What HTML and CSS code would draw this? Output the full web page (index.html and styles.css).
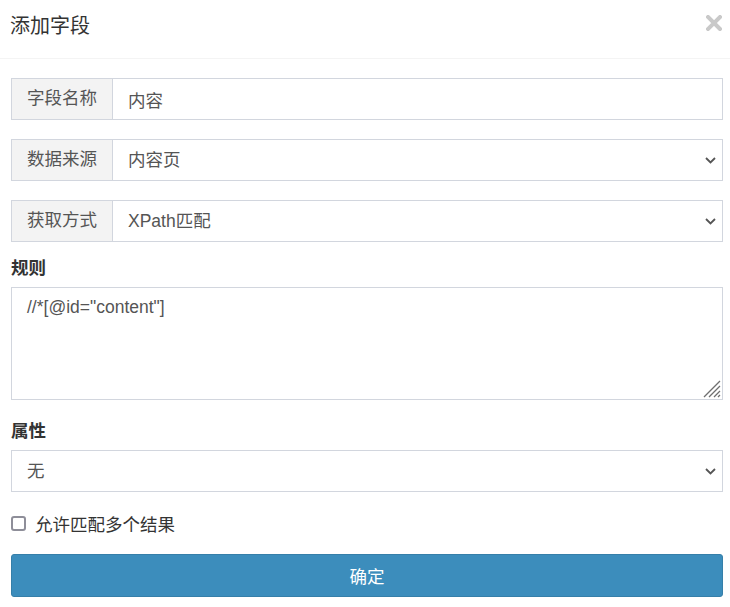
FILE: index.html
```html
<!DOCTYPE html>
<html lang="zh-CN">
<head>
<meta charset="utf-8">
<title>添加字段</title>
<link rel="stylesheet" href="styles.css">
</head>
<body>
<div class="modal">
  <div class="modal-header">
    <h4 class="modal-title">添加字段</h4>
    <button class="close" type="button" aria-label="Close">
      <svg width="16" height="16" viewBox="0 0 16 16"><path d="M2 2 L14 14 M14 2 L2 14" stroke="#c9c9c9" stroke-width="4" stroke-linecap="square"/></svg>
    </button>
  </div>
  <div class="modal-body">
    <div class="input-group">
      <span class="addon">字段名称</span>
      <input class="control" type="text" value="内容">
    </div>
    <div class="input-group">
      <span class="addon">数据来源</span>
      <div class="select-wrap">
        <select class="control select"><option>内容页</option></select>
        <svg class="chevron" width="11" height="7" viewBox="0 0 11 7"><path d="M1 1 L5.5 5.5 L10 1" fill="none" stroke="#555" stroke-width="1.8"/></svg>
      </div>
    </div>
    <div class="input-group last">
      <span class="addon">获取方式</span>
      <div class="select-wrap">
        <select class="control select"><option>XPath匹配</option></select>
        <svg class="chevron" width="11" height="7" viewBox="0 0 11 7"><path d="M1 1 L5.5 5.5 L10 1" fill="none" stroke="#555" stroke-width="1.8"/></svg>
      </div>
    </div>
    <div class="form-group">
      <label class="label">规则</label>
      <div class="textarea-wrap">
        <textarea class="control textarea">//*[@id="content"]</textarea>
        <svg class="grip" width="18" height="18" viewBox="0 0 18 18"><path d="M1 17 L17 1 M6 17 L17 6 M11 17 L17 11 M15 17 L17 15" stroke="#6f6f6f" stroke-width="1.3" fill="none"/></svg>
      </div>
    </div>
    <div class="form-group attr">
      <label class="label">属性</label>
      <div class="select-wrap">
        <select class="control select"><option>无</option></select>
        <svg class="chevron" width="11" height="7" viewBox="0 0 11 7"><path d="M1 1 L5.5 5.5 L10 1" fill="none" stroke="#555" stroke-width="1.8"/></svg>
      </div>
    </div>
    <label class="check-row">
      <input type="checkbox" class="check">
      <span>允许匹配多个结果</span>
    </label>
    <button class="btn-primary" type="button">确定</button>
  </div>
</div>
</body>
</html>
```
FILE: styles.css
```css
* { box-sizing: border-box; }
html, body { margin: 0; padding: 0; background: #fff; }
body {
  font-family: "Liberation Sans", "Noto Sans CJK SC", sans-serif;
  font-size: 17.5px;
  color: #333;
  width: 730px;
}
.modal { width: 730px; }
.modal-header {
  height: 59px;
  border-bottom: 1px solid #f4f4f4;
  display: flex;
  align-items: flex-start;
  justify-content: space-between;
  padding: 12px 8px 0 10px;
}
.modal-title {
  margin: 0;
  font-size: 20px;
  font-weight: normal;
  line-height: 28px;
  color: #333;
}
.close {
  border: 0;
  background: none;
  padding: 0;
  margin-top: 3px;
  width: 16px;
  height: 16px;
  cursor: pointer;
  display: block;
}
.close svg { display: block; }
.modal-body {
  padding: 19px 7px 0 11px;
}
.input-group {
  display: flex;
  height: 42px;
  margin-bottom: 19px;
}
.input-group.last { margin-bottom: 14px; }
.addon {
  flex: 0 0 101px;
  background: #f3f3f3;
  border: 1px solid #d2d6de;
  border-right: 0;
  color: #555;
  display: flex;
  align-items: center;
  justify-content: center;
  line-height: 1;
}
.control {
  font-family: inherit;
  font-size: 17.5px;
  color: #555;
  border: 1px solid #d2d6de;
  border-radius: 0;
  background: #fff;
  padding: 0 15px;
  width: 100%;
  height: 42px;
  outline: none;
  margin: 0;
}
.input-group > .control, .input-group > .select-wrap { flex: 1 1 auto; }
.select-wrap { position: relative; }
.select {
  appearance: none;
  -webkit-appearance: none;
  display: block;
}
.chevron {
  position: absolute;
  right: 7px;
  top: 18px;
  pointer-events: none;
}
.form-group { margin-bottom: 19px; }
.form-group.attr { margin-bottom: 19px; }
.label {
  display: block;
  font-weight: bold;
  color: #333;
  line-height: 25px;
  height: 25px;
  margin-bottom: 6px;
}
.textarea-wrap { position: relative; }
.textarea {
  display: block;
  height: 113px;
  padding: 7px 15px;
  line-height: 25px;
  resize: none;
}
.grip {
  position: absolute;
  right: 2px;
  bottom: 2px;
  pointer-events: none;
}
.check-row {
  display: flex;
  align-items: center;
  height: 25px;
  color: #333;
  margin-bottom: 18px;
}
.check {
  appearance: none;
  -webkit-appearance: none;
  width: 15px;
  height: 15px;
  border: 2px solid #8e8e99;
  border-radius: 3px;
  margin: 0 9px 0 0;
  background: #fff;
}
.btn-primary {
  display: block;
  width: 100%;
  height: 43px;
  background: #3c8dbc;
  border: 1px solid #367fa9;
  border-radius: 3px;
  color: #fff;
  font-family: inherit;
  font-size: 17.5px;
  cursor: pointer;
}
```
